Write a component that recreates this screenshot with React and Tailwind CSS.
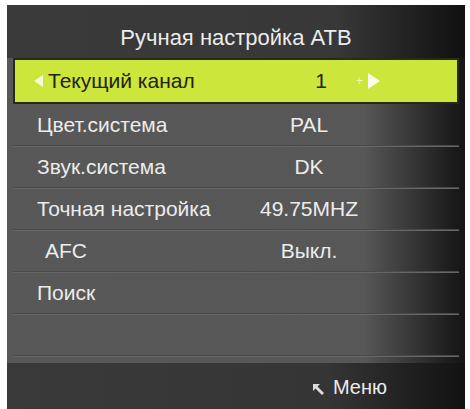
import React from 'react';

const rows = [
  { label: 'Цвет.система', value: 'PAL' },
  { label: 'Звук.система', value: 'DK' },
  { label: 'Точная настройка', value: '49.75MHZ' },
  { label: 'AFC', value: 'Выкл.', indent: true },
  { label: 'Поиск', value: '' },
  { label: '', value: '' },
];

const MenuRow = ({ label, value, indent }) => (
  <div className="flex h-[42px] items-center border-b border-[#4a4a4a] shadow-[0_1px_0_#666]">
    <span className={indent ? 'pl-[32px] w-[233px]' : 'pl-[24px] w-[233px]'}>{label}</span>
    <span className="w-[126px] text-center">{value}</span>
  </div>
);

const App = () => {
  return (
    <div className="h-[409px] w-[470px] bg-white pl-[7px] pr-[5px] pt-[5px] font-['Liberation_Sans',Arial,sans-serif] text-[21px] text-[#ececec]">
      <div className="flex h-[404px] flex-col bg-[linear-gradient(to_right,#3a3a3a_0%,#383838_72%,#101010_100%)]">
        {/* title */}
        <div className="flex h-[53px] items-end justify-center pb-[4px] text-[22px]">
          Ручная настройка АТВ
        </div>

        <div className="flex flex-1 flex-col bg-[linear-gradient(to_right,#585858_0%,#575757_78%,#1c1c1c_97%,#151515_100%)] px-[6px]">
          {/* selected row */}
          <div className="flex h-[46px] items-center border-2 border-[#2a2a1a] bg-[#cde63b] text-[#23230f]">
            <span className="ml-[19px] mr-[5px] h-0 w-0 border-y-[6px] border-r-[9px] border-y-transparent border-r-[#f6f9d8]"></span>
            <span className="w-[210px]">Текущий канал</span>
            <span className="w-[126px] text-center">1</span>
            <span className="ml-[-28px] text-[12px] text-[#eef6c0]">+</span>
            <span className="ml-[5px] h-0 w-0 border-y-[8px] border-l-[12px] border-y-transparent border-l-[#fbfdea]"></span>
          </div>

          {rows.map((r, i) => (
            <MenuRow key={i} {...r} />
          ))}
        </div>

        {/* footer */}
        <div className="flex h-[46px] items-center justify-end bg-[linear-gradient(to_right,#3a3a3a_0%,#353535_70%,#121212_100%)] pr-[78px] pt-[2px]">
          <svg width="16" height="16" viewBox="0 0 16 16" className="mr-[6px] mt-[6px]">
            <path d="M2 2 L9 2 L6.5 4.5 L13 11 L11 13 L4.5 6.5 L2 9 Z" fill="#dcdcdc" />
          </svg>
          <span className="text-[20px]">Меню</span>
        </div>
      </div>
    </div>
  );
};

export default App;
